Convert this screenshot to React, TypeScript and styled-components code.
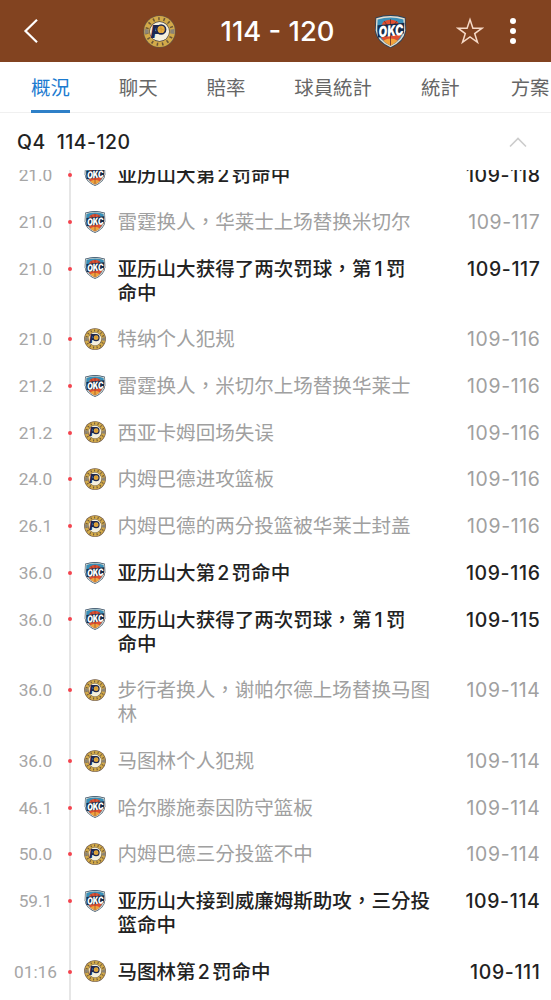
import React from 'react';
import styled, { createGlobalStyle } from 'styled-components';

const GlobalStyle = createGlobalStyle`
  * { box-sizing: border-box; }
  body {
    margin: 0;
    background: #fff;
    font-family: Inter, "Noto Sans CJK TC", sans-serif;
  }
`;

const Screen = styled.div`
  width: 551px;
  height: 1000px;
  overflow: hidden;
  display: flex;
  flex-direction: column;
  background: #fff;
`;

const TopBar = styled.header`
  flex: none;
  height: 62px;
  padding: 0 30px 0 22px;
  display: flex;
  align-items: center;
  background: #824320;
  color: #fff;
`;

const BackIcon = styled.svg`
  flex: none;
  width: 18px;
  height: 26px;
  margin-right: 103px;
`;

const Score = styled.h1`
  margin: 0;
  width: 198px;
  padding-left: 5px;
  text-align: center;
  font-size: 27.4px;
  font-weight: 500;
  line-height: 32px;
  white-space: nowrap;
`;

const StarIcon = styled.svg`
  flex: none;
  width: 28px;
  height: 28px;
  margin-left: 49px;
`;

const MoreButton = styled.div`
  margin-left: 26px;
  display: flex;
  flex-direction: column;
  gap: 4px;
`;

const MoreDot = styled.span`
  width: 6px;
  height: 6px;
  border-radius: 50%;
  background: #fff;
`;

const Tabs = styled.nav`
  flex: none;
  height: 51px;
  padding-left: 31px;
  display: flex;
  overflow: hidden;
  box-shadow: inset 0 -1px #f0f0f0;
`;

const Tab = styled.div<{ $active?: boolean; $gap?: number }>`
  flex: none;
  height: 51px;
  margin-right: ${({ $gap = 49 }) => $gap}px;
  font-size: 19.4px;
  line-height: 52px;
  color: ${({ $active }) => ($active ? '#1c7bd0' : '#666')};
  box-shadow: ${({ $active }) => ($active ? 'inset 0 -3px #2e80c8' : 'none')};
`;

const Period = styled.div`
  flex: none;
  height: 57px;
  padding: 0 24px 0 17px;
  display: flex;
  align-items: center;
  justify-content: space-between;
  font-size: 19.4px;
  font-weight: 500;
  letter-spacing: 0.5px;
  color: #222;
`;

const PeriodName = styled.span`
  margin-right: 11px;
`;

const Feed = styled.main`
  flex: 1;
  min-height: 0;
  overflow: hidden;
`;

const FeedRows = styled.div`
  margin-top: -18px;
`;

const Row = styled.div`
  display: flex;
  padding-right: 10.5px;
`;

const Time = styled.div`
  flex: none;
  width: 69px;
  padding: 11.35px 0 0 2px;
  font-family: Roboto, sans-serif;
  font-size: 17.3px;
  line-height: 24px;
  text-align: center;
  color: #a6a6a6;
`;

const Rail = styled.div`
  flex: none;
  width: 2px;
  padding-top: 21.3px;
  display: flex;
  justify-content: center;
  background: #e6e6e6;
`;

const RailDot = styled.span`
  flex: none;
  width: 4px;
  height: 4px;
  border-radius: 50%;
  background: #f4444e;
`;

const TeamMark = styled.div`
  flex: none;
  width: 46.5px;
  padding: 12px 0 0 13px;
  line-height: 0;
`;

const Description = styled.div<{ $scoring?: boolean }>`
  flex: none;
  width: 322px;
  padding: 11.35px 0;
  font-size: 19.55px;
  line-height: 24px;
  white-space: pre-line;
  font-weight: ${({ $scoring }) => ($scoring ? 500 : 400)};
  color: ${({ $scoring }) => ($scoring ? '#222' : '#a0a0a0')};
`;

const Digit = styled.span<{ $narrow?: boolean }>`
  padding: 0 ${({ $narrow }) => ($narrow ? 3.2 : 2.2)}px;
`;

const RunningScore = styled.div<{ $scoring?: boolean }>`
  flex: 1;
  padding-top: 11.35px;
  font-size: 19.4px;
  line-height: 24px;
  letter-spacing: 0.65px;
  text-align: right;
  white-space: nowrap;
  font-weight: ${({ $scoring }) => ($scoring ? 500 : 400)};
  color: ${({ $scoring }) => ($scoring ? '#222' : '#a0a0a0')};
`;

const Pacers = ({ size }: { size: number }) => (
  <svg width={size} height={size} viewBox="0 0 32 32">
    <circle cx="16" cy="16" r="15.800" fill="#6a5340" />
    <circle cx="16" cy="16" r="15" fill="#d3aa49" />
    <circle cx="16" cy="16" r="12.400" fill="none" stroke="#6a5538" strokeWidth="3" strokeDasharray="1.500 3.700" pathLength="78" />
    <path d="M1.500 13.500l4 .5v4l-4 .5zM30.500 13.500l-4 .5v4l4 .5z" fill="#8b8477" />
    <circle cx="16" cy="16" r="9.900" fill="#4d4542" />
    <circle cx="16" cy="16" r="9.300" fill="#f5f0dd" />
    <text x="7.600" y="22.300" fontFamily="Inter, sans-serif" fontSize="17.500" fontWeight="900" fontStyle="italic" fill="#1d2850">P</text>
    <circle cx="17.600" cy="14" r="4.300" fill="#e9ad3c" stroke="#1d2850" strokeWidth="1.600" />
    <path d="M14.200 13.500q4-1 6.800 1.500M17 10.500q1 3.500.5 7" fill="none" stroke="#b98330" strokeWidth=".5" />
  </svg>
);

const Thunder = ({ size }: { size: number }) => (
  <svg width={size} height={size} viewBox="0 0 32 32">
    <path d="M1.500 2.500Q16-2.300 30.500 2.500L31 15Q30 26 16 32Q2 26 1 15Z" fill="#26445f" />
    <path d="M2.200 3.200Q16-1.300 29.800 3.200L30.300 15Q29 25.500 16 31.200Q3 25.500 1.700 15Z" fill="#e4ddd0" />
    <path d="M3.500 4.400Q16 .3 28.500 4.400L29 15Q27.500 24.700 16 29.800Q4.500 24.700 3 15Z" fill="#3a8fb8" />
    <path d="M9 6.500Q16 2.500 23 6.500L27 14V18Q25 25 16 29.500Q7 25 5 18V14Z" fill="#df5030" />
    <path d="M9 25Q16 20.500 23 25Q20.500 27.700 16 29.800Q11.500 27.700 9 25Z" fill="#f2a43c" />
    <path d="M16 4V29.500M10 6Q13 9 13 13M22 6Q19 9 19 13" fill="none" stroke="#6b2c2b" strokeWidth=".8" />
    <path d="M3.500 10L29.500 7.500L29 18L3.500 22Z" fill="#152b49" />
    <text
      x="4.500"
      y="20.600"
      transform="rotate(-5 16 16)"
      fontFamily="Inter, sans-serif"
      fontSize="14.500"
      fontWeight="900"
      fontStyle="italic"
      textLength="24"
      lengthAdjust="spacingAndGlyphs"
      fill="#fff"
    >
      OKC
    </text>
  </svg>
);

type Team = 'IND' | 'OKC';
type Play = { time: string; team: Team; text: string; score: string; scoring?: boolean };

const plays: Play[] = [
  { time: '21.0', team: 'OKC', text: '亚历山大第2罚命中', score: '109-118', scoring: true },
  { time: '21.0', team: 'OKC', text: '雷霆换人，华莱士上场替换米切尔', score: '109-117' },
  { time: '21.0', team: 'OKC', text: '亚历山大获得了两次罚球，第1罚\n命中', score: '109-117', scoring: true },
  { time: '21.0', team: 'IND', text: '特纳个人犯规', score: '109-116' },
  { time: '21.2', team: 'OKC', text: '雷霆换人，米切尔上场替换华莱士', score: '109-116' },
  { time: '21.2', team: 'IND', text: '西亚卡姆回场失误', score: '109-116' },
  { time: '24.0', team: 'IND', text: '内姆巴德进攻篮板', score: '109-116' },
  { time: '26.1', team: 'IND', text: '内姆巴德的两分投篮被华莱士封盖', score: '109-116' },
  { time: '36.0', team: 'OKC', text: '亚历山大第2罚命中', score: '109-116', scoring: true },
  { time: '36.0', team: 'OKC', text: '亚历山大获得了两次罚球，第1罚\n命中', score: '109-115', scoring: true },
  { time: '36.0', team: 'IND', text: '步行者换人，谢帕尔德上场替换马图\n林', score: '109-114' },
  { time: '36.0', team: 'IND', text: '马图林个人犯规', score: '109-114' },
  { time: '46.1', team: 'OKC', text: '哈尔滕施泰因防守篮板', score: '109-114' },
  { time: '50.0', team: 'IND', text: '内姆巴德三分投篮不中', score: '109-114' },
  { time: '59.1', team: 'OKC', text: '亚历山大接到威廉姆斯助攻，三分投\n篮命中', score: '109-114', scoring: true },
  { time: '01:16', team: 'IND', text: '马图林第2罚命中', score: '109-111', scoring: true },
];

const withDigits = (text: string) =>
  text.split(/(\d)/).map((part, i) =>
    /^\d$/.test(part) ? (
      <Digit key={i} $narrow={part === '1'}>
        {part}
      </Digit>
    ) : (
      part
    ),
  );

export default function App() {
  return (
    <Screen>
      <GlobalStyle />
      <TopBar>
        <BackIcon viewBox="0 0 18 26">
          <path d="M15 1.800L3.500 13L15 24.200" fill="none" stroke="#fff" strokeWidth="2.200" />
        </BackIcon>
        <Pacers size={33} />
        <Score>114 - 120</Score>
        <Thunder size={33} />
        <StarIcon viewBox="0 0 28 28">
          <path
            d="M14 2.500L16.900 11.200H26L18.700 16.600L21.500 25.400L14 20L6.500 25.400L9.300 16.600L2 11.200H11.100Z"
            fill="none"
            stroke="#f6d9c6"
            strokeWidth="1.500"
          />
        </StarIcon>
        <MoreButton>
          <MoreDot />
          <MoreDot />
          <MoreDot />
        </MoreButton>
      </TopBar>
      <Tabs>
        <Tab $active>概況</Tab>
        <Tab>聊天</Tab>
        <Tab>賠率</Tab>
        <Tab>球員統計</Tab>
        <Tab $gap={51}>統計</Tab>
        <Tab $gap={0}>方案</Tab>
      </Tabs>
      <Period>
        <div>
          <PeriodName>Q4</PeriodName>
          <span>114-120</span>
        </div>
        <svg width="18" height="12" viewBox="0 0 18 12">
          <path d="M1 10.500L9 2.500L17 10.500" fill="none" stroke="#ccc" strokeWidth="1.600" />
        </svg>
      </Period>
      <Feed>
        <FeedRows>
          {plays.map((play, i) => (
            <Row key={i}>
              <Time>{play.time}</Time>
              <Rail>
                <RailDot />
              </Rail>
              <TeamMark>{play.team === 'OKC' ? <Thunder size={22} /> : <Pacers size={22} />}</TeamMark>
              <Description $scoring={play.scoring}>{withDigits(play.text)}</Description>
              <RunningScore $scoring={play.scoring}>{play.score}</RunningScore>
            </Row>
          ))}
          <Row>
            <Time />
            <Rail />
            <Description />
          </Row>
        </FeedRows>
      </Feed>
    </Screen>
  );
}
